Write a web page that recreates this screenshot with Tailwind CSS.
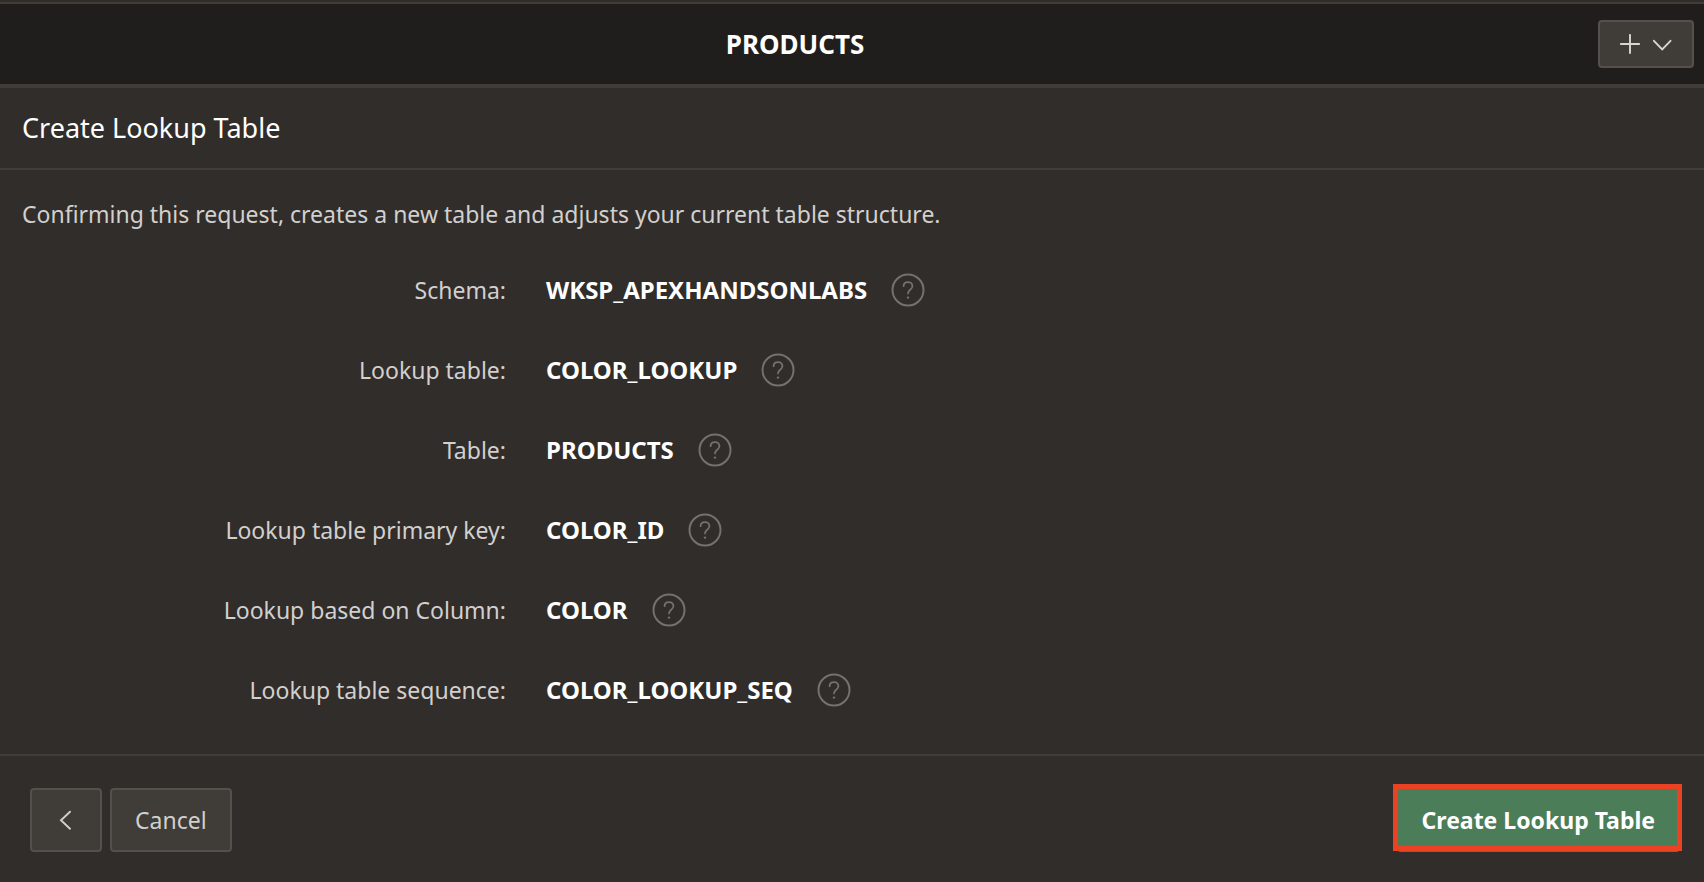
<!DOCTYPE html>
<html lang="en">
<head>
<meta charset="utf-8">
<meta name="viewport" content="width=device-width, initial-scale=1">
<title>Create Lookup Table</title>
<script src="https://cdn.jsdelivr.net/npm/@tailwindcss/browser@4"></script>
</head>
<body class="flex min-h-screen flex-col bg-[#312d2a] font-['Noto_Sans',sans-serif] text-[23px] text-[#d2d0ce]">
<svg class="hidden" aria-hidden="true">
  <symbol id="help" viewBox="0 0 34 34" fill="none" stroke="currentColor" stroke-linecap="round">
    <circle cx="17" cy="17" r="15.5" stroke-width="2"/>
    <path d="M12.6 13.2C12.6 10.7 14.5 9.1 17 9.1s4.4 1.7 4.4 4.1c0 3.6-4.4 3.5-4.4 7.2" stroke-width="1.8"/>
    <circle cx="17" cy="24.6" r="1.2" fill="currentColor" stroke="none"/>
  </symbol>
</svg>

<header class="mt-0.5 flex items-center gap-2 border-t-2 border-b-4 border-t-[#403c38] border-b-[#403c38] bg-[#201e1c] pr-2.5">
  <h1 class="flex-1 py-5 text-center text-[26px] leading-10 font-bold text-white">PRODUCTS</h1>
  <button type="button" aria-label="Create" class="flex h-12 w-24 items-center justify-center gap-3 rounded-sm border-2 border-[#55504c] bg-[#403c38] text-[#d8d6d3]">
    <svg class="size-5" viewBox="0 0 20 20" fill="none" stroke="currentColor" stroke-width="1.9" stroke-linecap="round"><path d="M10 0.9v18.2M0.9 10h18.2"/></svg>
    <svg class="size-5" viewBox="0 0 20 20" fill="none" stroke="currentColor" stroke-width="1.9" stroke-linecap="round"><path d="M1.9 6.8l8.3 8.6 8.3-8.6"/></svg>
  </button>
</header>

<main class="flex flex-1 flex-col">
  <h2 class="border-b-2 border-[#403c38] px-[22px] py-5 text-[27px] leading-10 text-white">Create Lookup Table</h2>
  <section class="flex-1 px-[22px] pt-6">
    <p class="leading-10">Confirming this request, creates a new table and adjusts your current table structure.</p>
    <dl class="mt-4">
      <div class="grid h-20 grid-cols-[484px_1fr] items-center gap-10">
        <dt class="text-right">Schema:</dt>
        <dd class="flex items-center gap-6 text-2xl font-bold text-white">WKSP_APEXHANDSONLABS<button type="button" aria-label="Help: Schema" class="text-[#75716d]"><svg class="size-[34px]"><use href="#help"/></svg></button></dd>
      </div>
      <div class="grid h-20 grid-cols-[484px_1fr] items-center gap-10">
        <dt class="text-right">Lookup table:</dt>
        <dd class="flex items-center gap-6 text-2xl font-bold text-white">COLOR_LOOKUP<button type="button" aria-label="Help: Lookup table" class="text-[#75716d]"><svg class="size-[34px]"><use href="#help"/></svg></button></dd>
      </div>
      <div class="grid h-20 grid-cols-[484px_1fr] items-center gap-10">
        <dt class="text-right">Table:</dt>
        <dd class="flex items-center gap-6 text-2xl font-bold text-white">PRODUCTS<button type="button" aria-label="Help: Table" class="text-[#75716d]"><svg class="size-[34px]"><use href="#help"/></svg></button></dd>
      </div>
      <div class="grid h-20 grid-cols-[484px_1fr] items-center gap-10">
        <dt class="text-right">Lookup table primary key:</dt>
        <dd class="flex items-center gap-6 text-2xl font-bold text-white">COLOR_ID<button type="button" aria-label="Help: Lookup table primary key" class="text-[#75716d]"><svg class="size-[34px]"><use href="#help"/></svg></button></dd>
      </div>
      <div class="grid h-20 grid-cols-[484px_1fr] items-center gap-10">
        <dt class="text-right">Lookup based on Column:</dt>
        <dd class="flex items-center gap-6 text-2xl font-bold text-white">COLOR<button type="button" aria-label="Help: Lookup based on Column" class="text-[#75716d]"><svg class="size-[34px]"><use href="#help"/></svg></button></dd>
      </div>
      <div class="grid h-20 grid-cols-[484px_1fr] items-center gap-10">
        <dt class="text-right">Lookup table sequence:</dt>
        <dd class="flex items-center gap-6 text-2xl font-bold text-white">COLOR_LOOKUP_SEQ<button type="button" aria-label="Help: Lookup table sequence" class="text-[#75716d]"><svg class="size-[34px]"><use href="#help"/></svg></button></dd>
      </div>
    </dl>
  </section>
</main>

<footer class="flex items-center gap-2 border-t-2 border-[#403c38] pt-8 pr-6 pb-[30px] pl-[30px]">
  <button type="button" aria-label="Previous" class="flex h-16 w-[72px] items-center justify-center rounded-sm border-2 border-[#55504c] bg-[#403c38]">
    <svg class="size-5" viewBox="0 0 20 20" fill="none" stroke="currentColor" stroke-width="1.9" stroke-linecap="round"><path d="M14 1.7L5 10.2l9 8.5"/></svg>
  </button>
  <button type="button" class="h-16 rounded-sm border-2 border-[#55504c] bg-[#403c38] px-[23px]">Cancel</button>
  <button type="button" class="relative ml-auto h-16 rounded-sm bg-[#4b7d58] px-[25px] font-bold text-white">Create Lookup Table
    <!-- Highlight frame around the primary action -->
    <span class="absolute -top-1 -right-0.5 bottom-px -left-1 border-5 border-[#ec4224]"></span>
  </button>
</footer>
</body>
</html>
